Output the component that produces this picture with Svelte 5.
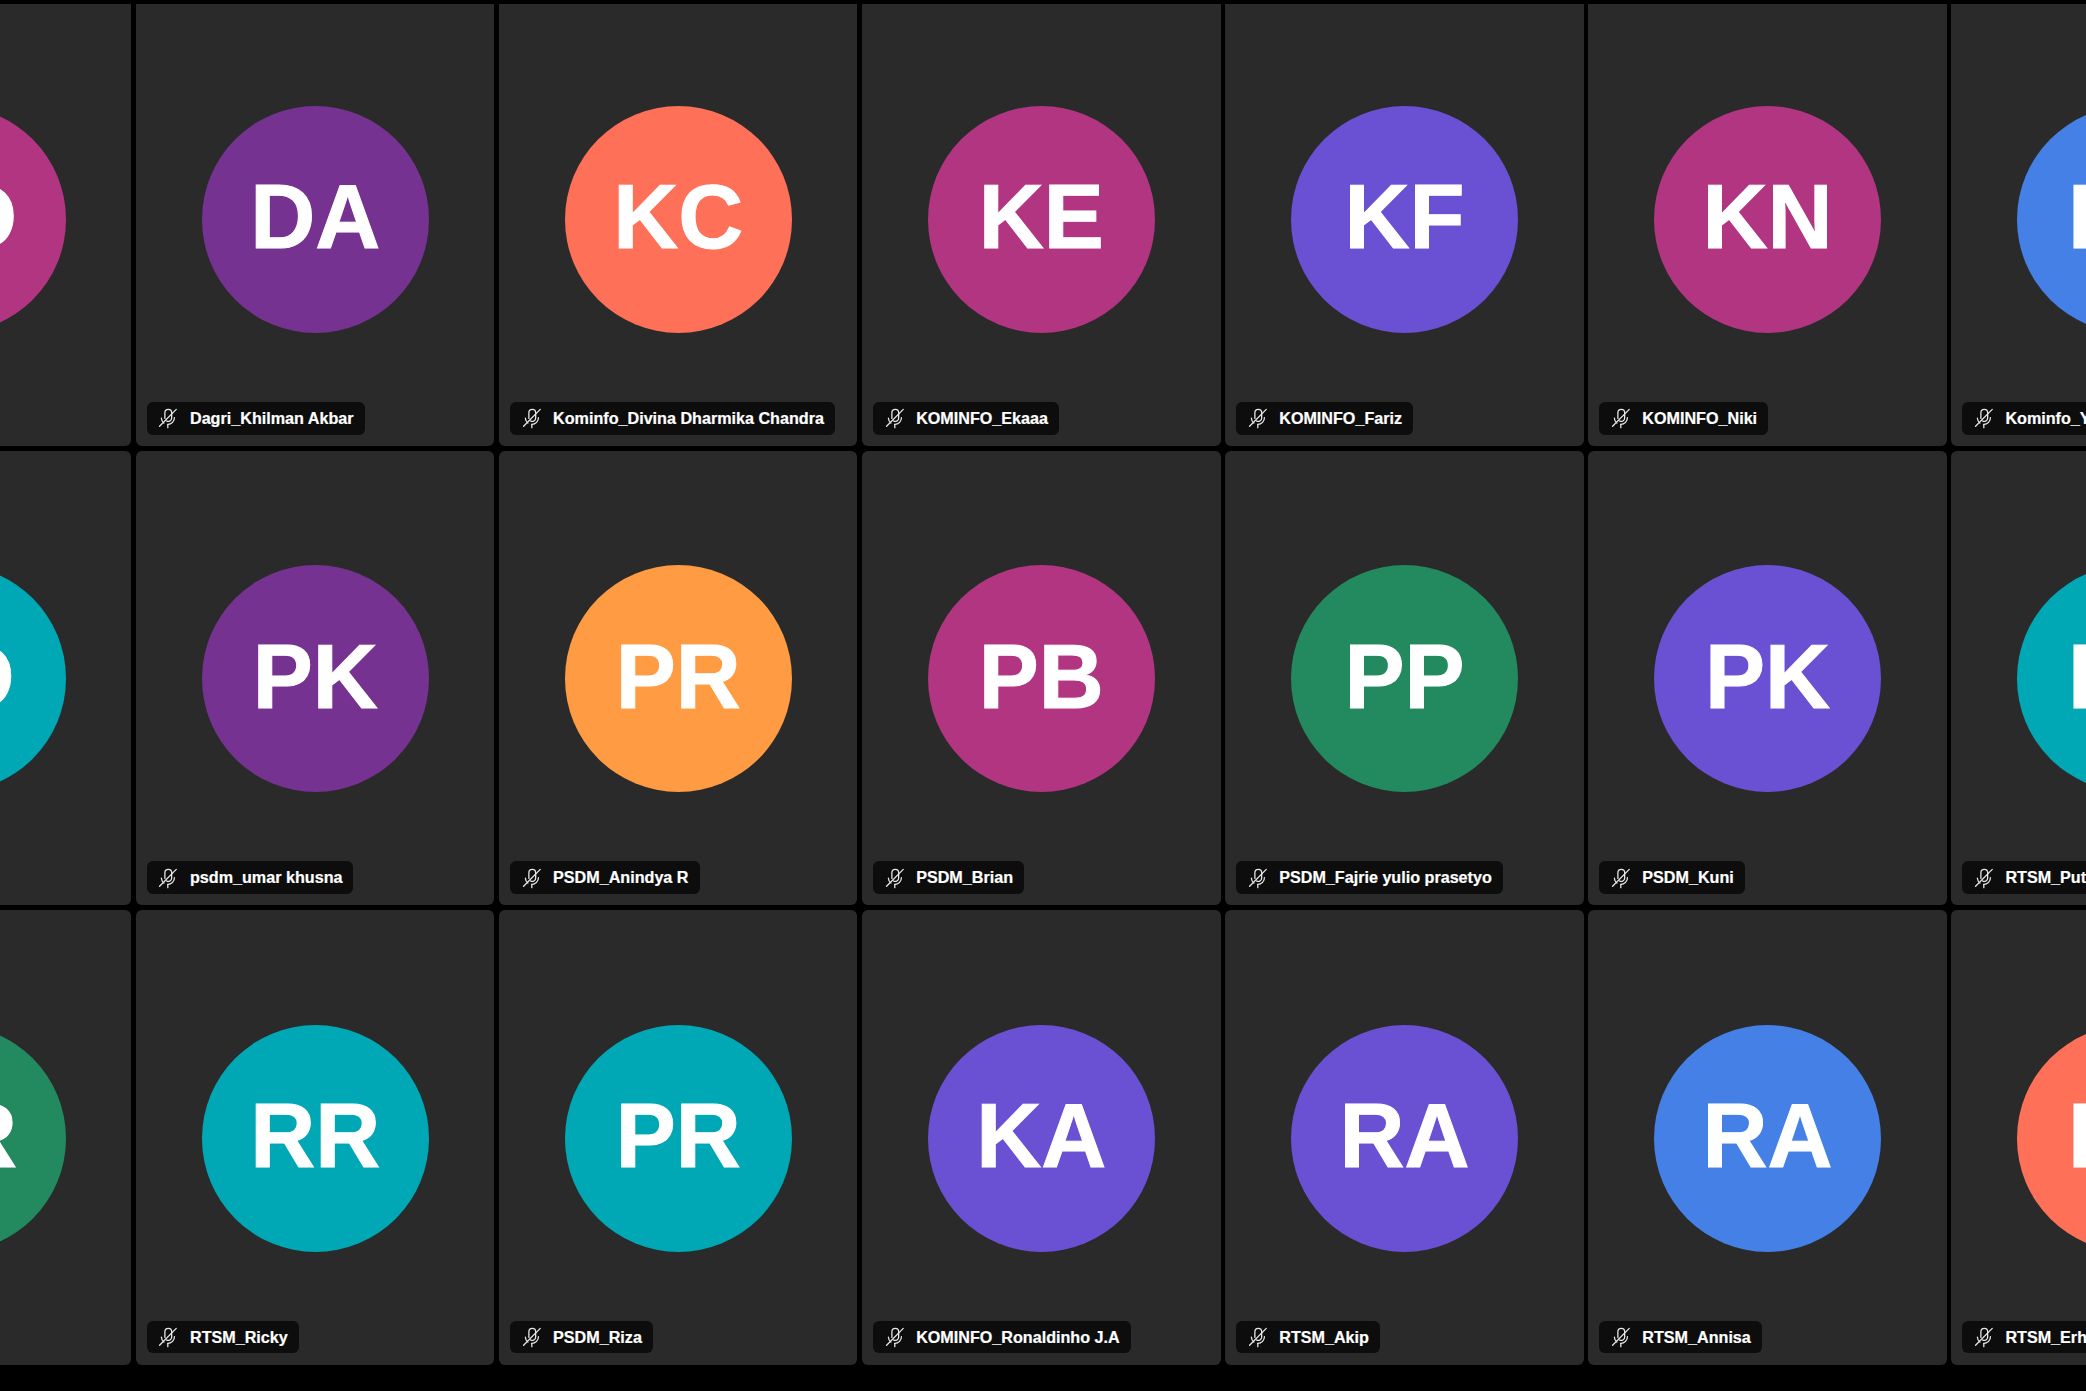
<script>
    const tiles = [
        { initials: 'DD', name: 'Dagri_D', color: '#b23582' },
        { initials: 'DA', name: 'Dagri_Khilman Akbar', color: '#753291' },
        { initials: 'KC', name: 'Kominfo_Divina Dharmika Chandra', color: '#ff7058' },
        { initials: 'KE', name: 'KOMINFO_Ekaaa', color: '#b23582' },
        { initials: 'KF', name: 'KOMINFO_Fariz', color: '#6a50d3' },
        { initials: 'KN', name: 'KOMINFO_Niki', color: '#b23582' },
        { initials: 'KY', name: 'Kominfo_Yusuf', color: '#4580e6' },

        { initials: 'PD', name: 'PSDM_D', color: '#00a8b6' },
        { initials: 'PK', name: 'psdm_umar khusna', color: '#753291' },
        { initials: 'PR', name: 'PSDM_Anindya R', color: '#ff9b42' },
        { initials: 'PB', name: 'PSDM_Brian', color: '#b23582' },
        { initials: 'PP', name: 'PSDM_Fajrie yulio prasetyo', color: '#23895f' },
        { initials: 'PK', name: 'PSDM_Kuni', color: '#6a50d3' },
        { initials: 'RP', name: 'RTSM_Putri', color: '#00a8b6' },

        { initials: 'RR', name: 'RTSM_R', color: '#23895f' },
        { initials: 'RR', name: 'RTSM_Ricky', color: '#00a8b6' },
        { initials: 'PR', name: 'PSDM_Riza', color: '#00a8b6' },
        { initials: 'KA', name: 'KOMINFO_Ronaldinho J.A', color: '#6a50d3' },
        { initials: 'RA', name: 'RTSM_Akip', color: '#6a50d3' },
        { initials: 'RA', name: 'RTSM_Annisa', color: '#4580e6' },
        { initials: 'RE', name: 'RTSM_Erhan', color: '#ff7058' }
    ];
</script>

<main class="stage">
    <div class="grid">
        {#each tiles as tile}
            <section class="tile">
                <div class="avatar" style="background: {tile.color}">{tile.initials}</div>
                <div class="label">
                    <svg class="mic" viewBox="0 0 24 24" fill="none" stroke="currentColor" stroke-width="1.4" stroke-linecap="round">
                        <path d="M8.6 12.5V6.3a3.7 3.7 0 0 1 7.4 0V12a3.7 3.7 0 0 1-5.6 3.2" />
                        <path d="M4.8 12.2a7.2 7.2 0 0 0 2.7 5.3M19 11.6a7.2 7.2 0 0 1-7.2 7.4" />
                        <path d="M11.8 19V22.6" />
                        <path d="M2.8 21L21 2.6" />
                    </svg>
                    <span>{tile.name}</span>
                </div>
            </section>
        {/each}
    </div>
</main>

<style>
    :global(body) {
        margin: 0;
        background: #000;
    }

    .stage {
        height: 1387px;
        margin-top: 4px;
        background: #000;
        overflow: hidden;
    }

    .grid {
        display: grid;
        grid-template-columns: repeat(7, 358.4px);
        grid-auto-rows: 454.7px;
        gap: 4.8px 4.7px;
        margin: -12.7px 0 0 -227.1px;
        width: 2600px;
    }

    .tile {
        position: relative;
        display: flex;
        align-items: center;
        justify-content: center;
        background: #2a2a2a;
        border-radius: 6px;
        overflow: hidden;
    }

    .avatar {
        box-sizing: border-box;
        width: 227px;
        height: 227px;
        margin-top: 1px;
        padding-bottom: 4px;
        border-radius: 50%;
        display: flex;
        align-items: center;
        justify-content: center;
        color: #fff;
        font-family: "Liberation Sans", Arial, sans-serif;
        font-weight: 700;
        font-size: 90px;
        line-height: 1;
        -webkit-text-stroke: 1px #fff;
    }

    .label {
        position: absolute;
        left: 11px;
        bottom: 11.5px;
        height: 32.5px;
        display: flex;
        align-items: center;
        gap: 10.5px;
        padding: 0 11px 0 10.5px;
        background: #0d0d0d;
        border-radius: 6px;
        color: #fff;
        font-family: "Liberation Sans", Arial, sans-serif;
        font-weight: 700;
        font-size: 16.15px;
        white-space: nowrap;
        -webkit-text-stroke: 0.2px #fff;
    }

    .mic {
        width: 22px;
        height: 22px;
        flex: none;
        color: #e8e8e8;
    }
</style>
